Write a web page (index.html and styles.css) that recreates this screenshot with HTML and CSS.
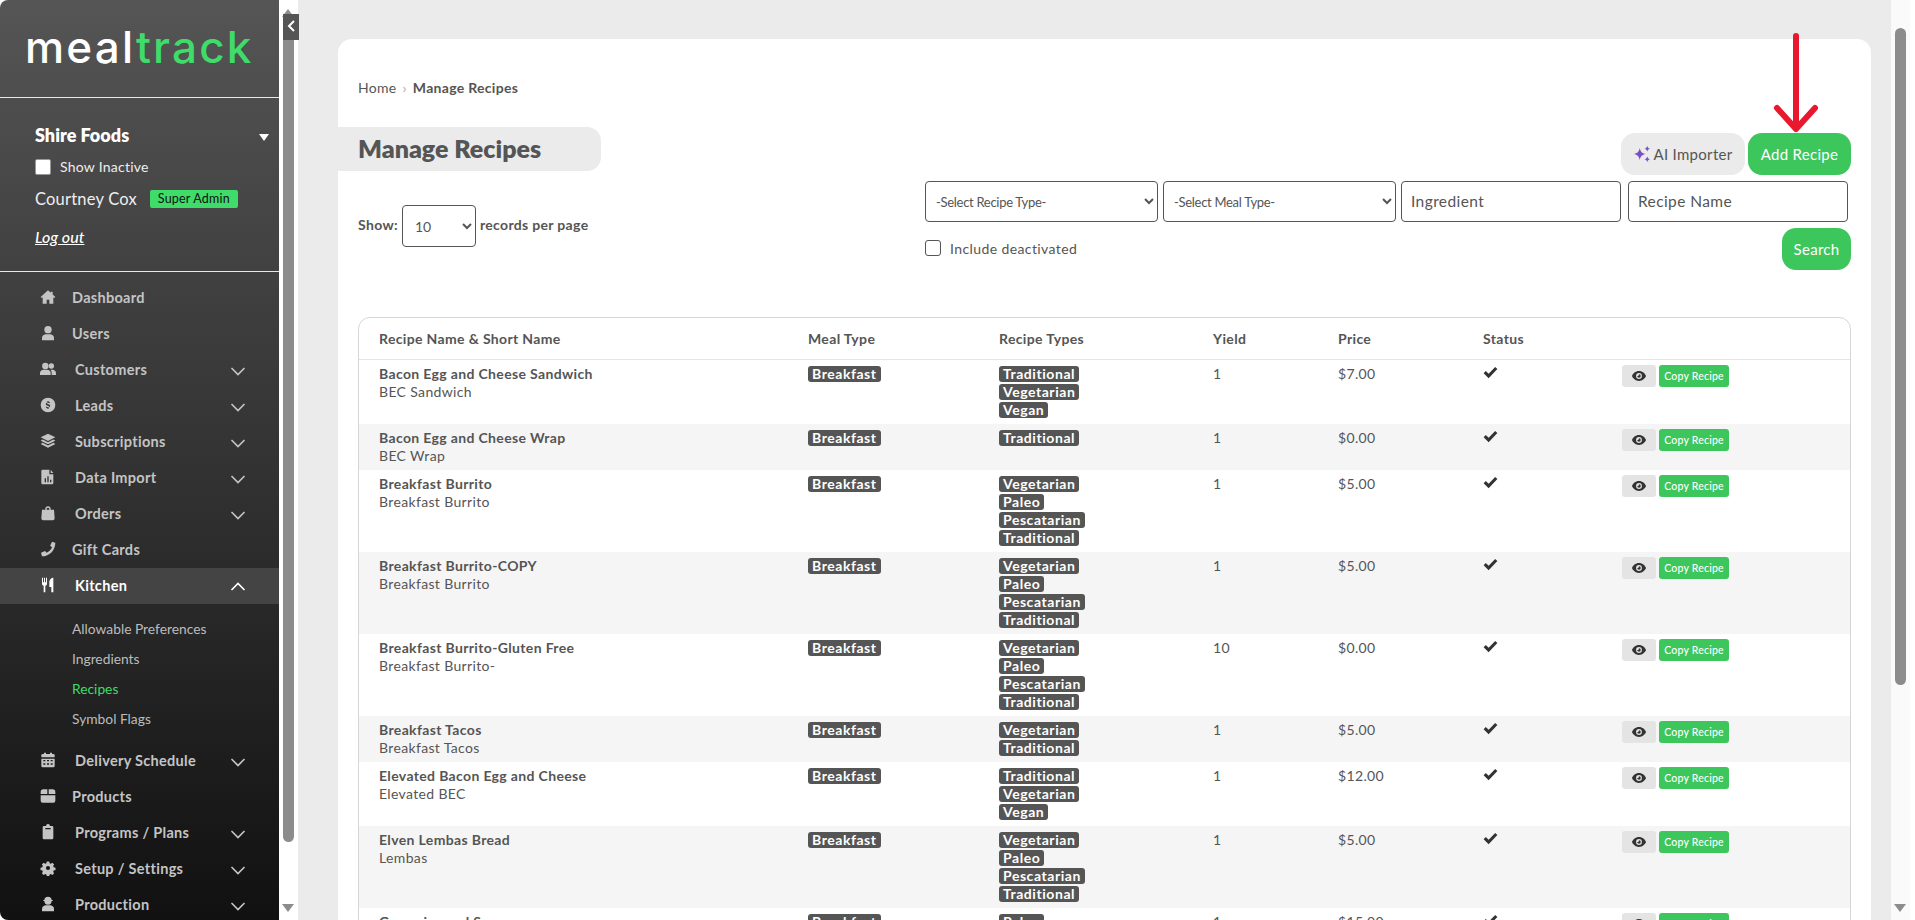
FILE: index.html
```html
<!DOCTYPE html>
<html lang="en">
<head>
<meta charset="utf-8">
<title>Manage Recipes</title>
<link rel="stylesheet" href="styles.css">
</head>
<body>
<svg class="defs" width="0" height="0">
  <symbol id="i-home" viewBox="0 0 24 24"><path d="M12 2 1 12l1.500 1.500L4 12.200V22h6v-6h4v6h6v-9.800l1.500 1.300L23 12l-4-3.600V4h-3v1.700z"/></symbol>
  <symbol id="i-user" viewBox="0 0 24 24"><circle cx="12" cy="7" r="5.500"/><path d="M3 23v-3.500C3 16 6 14 9 14h6c3 0 6 2 6 5.500V23z"/></symbol>
  <symbol id="i-users" viewBox="0 0 24 24"><circle cx="8" cy="7.500" r="4.800"/><circle cx="17" cy="7.500" r="4"/><path d="M0 21v-3c0-3 2.500-5 5-5h6c2.500 0 5 2 5 5v3z"/><path d="M17.500 21v-3.500c0-1.700-.6-3.200-1.700-4.500H19c2.700 0 5 2 5 5v3z"/></symbol>
  <symbol id="i-coin" viewBox="0 0 24 24"><path fill-rule="evenodd" d="M12 1a11 11 0 1 0 0 22 11 11 0 0 0 0-22zm.8 5v1.300c1 .2 1.800.7 2.200 1.300l-1.100.9c-.4-.5-1-.8-1.900-.8-.9 0-1.400.4-1.400.9s.4.800 1.800 1.100c1.800.4 2.900 1 2.900 2.600 0 1.300-1 2.200-2.500 2.400V18h-1.500v-1.300c-1.200-.2-2.100-.7-2.600-1.500l1.100-.9c.5.600 1.200 1 2.200 1 1 0 1.500-.4 1.500-1s-.4-.9-1.900-1.200c-1.700-.4-2.800-1-2.800-2.500 0-1.200.9-2.100 2.400-2.300V6z"/></symbol>
  <symbol id="i-layers" viewBox="0 0 24 24"><path d="M12 1 1 6.500 12 12l11-5.500z"/><path d="M4 9.800 1 11.500 12 17l11-5.500-3-1.700-8 4z"/><path d="M4 14.800 1 16.500 12 22l11-5.500-3-1.700-8 4z"/></symbol>
  <symbol id="i-file" viewBox="0 0 24 24"><path fill-rule="evenodd" d="M4 1h10v7h6v13a2 2 0 0 1-2 2H4a2 2 0 0 1-2-2V3a2 2 0 0 1 2-2zm12 0 4 5h-4zM7 14v6h2v-6zm4-3v9h2v-9zm4 5v4h2v-4z"/></symbol>
  <symbol id="i-bag" viewBox="0 0 24 24"><path fill-rule="evenodd" d="M8 7V6a4 4 0 0 1 8 0v1h5l1 13a3 3 0 0 1-3 3H5a3 3 0 0 1-3-3L3 7zm2 0h4V6a2 2 0 0 0-4 0z"/></symbol>
  <symbol id="i-phone" viewBox="0 0 24 24"><path d="M23 2.500 18 1l-2.800 6 2.800 2.500c-1.500 3.500-4.500 6.500-8 8L7.500 15 1.500 17.800 3 23c11 0 20-9 20-20.500z"/></symbol>
  <symbol id="i-food" viewBox="0 0 24 24"><path d="M3 1h1.500v7H6V1h1.500v7H9V1h1.500v9c0 1.500-1 2.500-2.500 3v10H5.500V13C4 12.500 3 11.500 3 10zM20 1v22h-3v-8h-3V7c0-3 3-6 6-6z"/></symbol>
  <symbol id="i-cal" viewBox="0 0 24 24"><path fill-rule="evenodd" d="M6 1h3v2h6V1h3v2h2a2 2 0 0 1 2 2v3H2V5a2 2 0 0 1 2-2h2zM2 10h20v11a2 2 0 0 1-2 2H4a2 2 0 0 1-2-2zm3 2v2h3v-2zm5.500 0v2h3v-2zm5.500 0v2h3v-2zM5 17v2h3v-2zm5.500 0v2h3v-2zm5.500 0v2h3v-2z"/></symbol>
  <symbol id="i-box" viewBox="0 0 24 24"><path d="M5 2h6v7H1V6a4 4 0 0 1 4-4zM13 2h6a4 4 0 0 1 4 4v3H13zM1 11h22v8a3 3 0 0 1-3 3H4a3 3 0 0 1-3-3z"/></symbol>
  <symbol id="i-clip" viewBox="0 0 24 24"><path fill-rule="evenodd" d="M12 0a3 3 0 0 1 3 3h3a2 2 0 0 1 2 2v16a2 2 0 0 1-2 2H6a2 2 0 0 1-2-2V5a2 2 0 0 1 2-2h3a3 3 0 0 1 3-3zM8 6v2h8V6z"/></symbol>
  <symbol id="i-gear" viewBox="0 0 24 24"><path fill-rule="evenodd" d="m10 1h4l.7 3 2 .9 2.700-1.600 2.800 2.800-1.600 2.700.9 2 3 .7v4l-3 .7-.9 2 1.600 2.700-2.800 2.800-2.700-1.600-2 .9-.7 3h-4l-.7-3-2-.9-2.700 1.600-2.800-2.800 1.600-2.700-.9-2-3-.7v-4l3-.7.9-2L1.800 6.100 4.600 3.300l2.700 1.600 2-.9zM12 8.500a3.500 3.500 0 1 0 0 7 3.500 3.500 0 0 0 0-7z" transform="translate(1.200 1.200) scale(.9)"/></symbol>
  <symbol id="i-worker" viewBox="0 0 24 24"><path d="M12 1c3.500 0 5.500 2.500 5.500 5H19v1.500h-1.500A5.500 5.500 0 0 1 6.500 7.500H5V6h1.500c0-2.500 2-5 5.500-5z"/><path d="M3 23v-3.500C3 16 6 14 9 14h6c3 0 6 2 6 5.500V23z"/></symbol>
  <symbol id="i-eye" viewBox="0 0 24 24"><path fill-rule="evenodd" d="M12 3.500C18 3.500 22.500 8 24 12c-1.500 4-6 8.500-12 8.500S1.500 16 0 12C1.500 8 6 3.500 12 3.500zM12 7a5 5 0 1 0 0 10 5 5 0 0 0 0-10zm0 2a3 3 0 0 1 3 3 3 3 0 0 1-6 0c1.500.5 3-1 3-3z"/></symbol>
  <symbol id="i-check" viewBox="0 0 24 24"><path d="M9 21 1 13l3.500-3.500L9 14 19.500 3 23 6.500z"/></symbol>
  <symbol id="i-down" viewBox="0 0 14 9"><path d="M1 1.500 7 7.500l6-6" fill="none" stroke="currentColor" stroke-width="1.700" stroke-linecap="round"/></symbol>
  <symbol id="i-up" viewBox="0 0 14 9"><path d="M1 7.500 7 1.500l6 6" fill="none" stroke="currentColor" stroke-width="1.700" stroke-linecap="round"/></symbol>
</svg>

<aside class="sidebar">
  <div class="brand"><span class="brand-meal">meal</span><span class="brand-track">track</span></div>
  <div class="account">
    <div class="account-name"><span>Shire Foods</span><i class="caret"></i></div>
    <label class="account-check"><span class="white-box"></span>Show Inactive</label>
    <div class="account-user"><span>Courtney Cox</span><span class="role">Super Admin</span></div>
    <a class="logout">Log out</a>
  </div>
  <nav class="nav">
    <a class="nav-item"><svg class="nav-icon"><use href="#i-home"/></svg><span class="nav-label">Dashboard</span></a>
    <a class="nav-item"><svg class="nav-icon"><use href="#i-user"/></svg><span class="nav-label">Users</span></a>
    <a class="nav-item has-sub"><svg class="nav-icon"><use href="#i-users"/></svg><span class="nav-label">Customers</span><svg class="nav-chev"><use href="#i-down"/></svg></a>
    <a class="nav-item has-sub"><svg class="nav-icon"><use href="#i-coin"/></svg><span class="nav-label">Leads</span><svg class="nav-chev"><use href="#i-down"/></svg></a>
    <a class="nav-item has-sub"><svg class="nav-icon"><use href="#i-layers"/></svg><span class="nav-label">Subscriptions</span><svg class="nav-chev"><use href="#i-down"/></svg></a>
    <a class="nav-item has-sub"><svg class="nav-icon"><use href="#i-file"/></svg><span class="nav-label">Data Import</span><svg class="nav-chev"><use href="#i-down"/></svg></a>
    <a class="nav-item has-sub"><svg class="nav-icon"><use href="#i-bag"/></svg><span class="nav-label">Orders</span><svg class="nav-chev"><use href="#i-down"/></svg></a>
    <a class="nav-item"><svg class="nav-icon"><use href="#i-phone"/></svg><span class="nav-label">Gift Cards</span></a>
    <a class="nav-item has-sub is-open"><svg class="nav-icon"><use href="#i-food"/></svg><span class="nav-label">Kitchen</span><svg class="nav-chev"><use href="#i-up"/></svg></a>
    <div class="subnav">
      <a class="sub-item">Allowable Preferences</a>
      <a class="sub-item">Ingredients</a>
      <a class="sub-item is-current">Recipes</a>
      <a class="sub-item">Symbol Flags</a>
    </div>
    <a class="nav-item has-sub"><svg class="nav-icon"><use href="#i-cal"/></svg><span class="nav-label">Delivery Schedule</span><svg class="nav-chev"><use href="#i-down"/></svg></a>
    <a class="nav-item"><svg class="nav-icon"><use href="#i-box"/></svg><span class="nav-label">Products</span></a>
    <a class="nav-item has-sub"><svg class="nav-icon"><use href="#i-clip"/></svg><span class="nav-label">Programs / Plans</span><svg class="nav-chev"><use href="#i-down"/></svg></a>
    <a class="nav-item has-sub"><svg class="nav-icon"><use href="#i-gear"/></svg><span class="nav-label">Setup / Settings</span><svg class="nav-chev"><use href="#i-down"/></svg></a>
    <a class="nav-item has-sub"><svg class="nav-icon"><use href="#i-worker"/></svg><span class="nav-label">Production</span><svg class="nav-chev"><use href="#i-down"/></svg></a>
  </nav>
</aside>

<div class="scroll side-scroll">
  <i class="arrow-up"></i><div class="thumb side-thumb"></div><i class="arrow-down side-down"></i>
  <div class="collapse"><svg viewBox="0 0 10 14" width="10" height="14"><path d="M8 2 3 7l5 5" fill="none" stroke="#fff" stroke-width="2"/></svg></div>
</div>

<main class="main">
  <section class="card">
    <div class="crumbs"><a>Home</a><span class="crumb-sep">›</span><strong>Manage Recipes</strong></div>
    <div class="title-row">
      <h1 class="title">Manage Recipes</h1>
      <div class="title-actions">
        <button class="btn btn-grey"><svg viewBox="0 0 24 24" width="18" height="18"><path fill="#7a4fc4" d="M9 4c1 5 3 7 8 8-5 1-7 3-8 8-1-5-3-7-8-8 5-1 7-3 8-8zM19 1c.5 2.500 1.500 3.500 4 4-2.500.5-3.500 1.500-4 4-.5-2.500-1.500-3.500-4-4 2.500-.5 3.500-1.500 4-4zM19 15c.5 2.500 1.500 3.500 4 4-2.500.5-3.500 1.500-4 4-.5-2.500-1.500-3.500-4-4 2.500-.5 3.500-1.500 4-4z"/></svg>AI Importer</button>
        <button class="btn btn-green">Add Recipe</button>
      </div>
    </div>
    <div class="filter-row">
      <div class="show"><b>Show:</b><select class="field show-select"><option>10</option></select><b>records per page</b></div>
      <div class="filters">
        <div class="filter-fields">
          <select class="field filter-select"><option>-Select Recipe Type-</option></select>
          <select class="field filter-select"><option>-Select Meal Type-</option></select>
          <input class="field filter-input" placeholder="Ingredient">
          <input class="field filter-input gap-input" placeholder="Recipe Name">
        </div>
        <div class="filter-foot">
          <label class="deact"><span class="check-box"></span>Include deactivated</label>
          <button class="btn btn-green btn-search">Search</button>
        </div>
      </div>
    </div>
    <div class="table-wrap">
      <table class="recipes">
        <colgroup><col class="c1"><col class="c2"><col class="c3"><col class="c4"><col class="c5"><col class="c6"><col class="c7"><col class="c8"></colgroup>
        <thead><tr><th>Recipe Name &amp; Short Name</th><th>Meal Type</th><th>Recipe Types</th><th>Yield</th><th>Price</th><th>Status</th><th></th><th></th></tr></thead>
        <tbody>
          <tr><td><b>Bacon Egg and Cheese Sandwich</b><br>BEC Sandwich</td><td><span class="tag">Breakfast</span></td><td><span class="tag">Traditional</span><span class="tag">Vegetarian</span><span class="tag">Vegan</span></td><td>1</td><td>$7.00</td><td><svg class="tick"><use href="#i-check"/></svg></td><td><div class="acts"><button class="mini mini-eye"><svg class="eye"><use href="#i-eye"/></svg></button><button class="mini mini-copy">Copy Recipe</button></div></td><td></td></tr>
          <tr><td><b>Bacon Egg and Cheese Wrap</b><br>BEC Wrap</td><td><span class="tag">Breakfast</span></td><td><span class="tag">Traditional</span></td><td>1</td><td>$0.00</td><td><svg class="tick"><use href="#i-check"/></svg></td><td><div class="acts"><button class="mini mini-eye"><svg class="eye"><use href="#i-eye"/></svg></button><button class="mini mini-copy">Copy Recipe</button></div></td><td></td></tr>
          <tr><td><b>Breakfast Burrito</b><br>Breakfast Burrito</td><td><span class="tag">Breakfast</span></td><td><span class="tag">Vegetarian</span><span class="tag">Paleo</span><span class="tag">Pescatarian</span><span class="tag">Traditional</span></td><td>1</td><td>$5.00</td><td><svg class="tick"><use href="#i-check"/></svg></td><td><div class="acts"><button class="mini mini-eye"><svg class="eye"><use href="#i-eye"/></svg></button><button class="mini mini-copy">Copy Recipe</button></div></td><td></td></tr>
          <tr><td><b>Breakfast Burrito-COPY</b><br>Breakfast Burrito</td><td><span class="tag">Breakfast</span></td><td><span class="tag">Vegetarian</span><span class="tag">Paleo</span><span class="tag">Pescatarian</span><span class="tag">Traditional</span></td><td>1</td><td>$5.00</td><td><svg class="tick"><use href="#i-check"/></svg></td><td><div class="acts"><button class="mini mini-eye"><svg class="eye"><use href="#i-eye"/></svg></button><button class="mini mini-copy">Copy Recipe</button></div></td><td></td></tr>
          <tr><td><b>Breakfast Burrito-Gluten Free</b><br>Breakfast Burrito-</td><td><span class="tag">Breakfast</span></td><td><span class="tag">Vegetarian</span><span class="tag">Paleo</span><span class="tag">Pescatarian</span><span class="tag">Traditional</span></td><td>10</td><td>$0.00</td><td><svg class="tick"><use href="#i-check"/></svg></td><td><div class="acts"><button class="mini mini-eye"><svg class="eye"><use href="#i-eye"/></svg></button><button class="mini mini-copy">Copy Recipe</button></div></td><td></td></tr>
          <tr><td><b>Breakfast Tacos</b><br>Breakfast Tacos</td><td><span class="tag">Breakfast</span></td><td><span class="tag">Vegetarian</span><span class="tag">Traditional</span></td><td>1</td><td>$5.00</td><td><svg class="tick"><use href="#i-check"/></svg></td><td><div class="acts"><button class="mini mini-eye"><svg class="eye"><use href="#i-eye"/></svg></button><button class="mini mini-copy">Copy Recipe</button></div></td><td></td></tr>
          <tr><td><b>Elevated Bacon Egg and Cheese</b><br>Elevated BEC</td><td><span class="tag">Breakfast</span></td><td><span class="tag">Traditional</span><span class="tag">Vegetarian</span><span class="tag">Vegan</span></td><td>1</td><td>$12.00</td><td><svg class="tick"><use href="#i-check"/></svg></td><td><div class="acts"><button class="mini mini-eye"><svg class="eye"><use href="#i-eye"/></svg></button><button class="mini mini-copy">Copy Recipe</button></div></td><td></td></tr>
          <tr><td><b>Elven Lembas Bread</b><br>Lembas</td><td><span class="tag">Breakfast</span></td><td><span class="tag">Vegetarian</span><span class="tag">Paleo</span><span class="tag">Pescatarian</span><span class="tag">Traditional</span></td><td>1</td><td>$5.00</td><td><svg class="tick"><use href="#i-check"/></svg></td><td><div class="acts"><button class="mini mini-eye"><svg class="eye"><use href="#i-eye"/></svg></button><button class="mini mini-copy">Copy Recipe</button></div></td><td></td></tr>
          <tr><td><b>Groceries and Soup</b><br>Soup</td><td><span class="tag">Breakfast</span></td><td><span class="tag">Paleo</span></td><td>1</td><td>$15.00</td><td><svg class="tick"><use href="#i-check"/></svg></td><td><div class="acts"><button class="mini mini-eye"><svg class="eye"><use href="#i-eye"/></svg></button><button class="mini mini-copy">Copy Recipe</button></div></td><td></td></tr>
        </tbody>
      </table>
    </div>
    <svg class="annot" viewBox="0 0 50 100" width="50" height="100"><path d="M25 3v91M6 75l19 21 19-21" fill="none" stroke="#e8192f" stroke-width="6" stroke-linecap="round" stroke-linejoin="round"/></svg>
  </section>
</main>

<div class="scroll page-scroll">
  <div class="thumb page-thumb"></div><i class="arrow-down page-down"></i>
</div>
</body>
</html>
```

FILE: styles.css
```css
* { box-sizing: border-box; }
html, body { height: 100%; }
body {
  margin: 0;
  display: flex;
  height: 920px;
  overflow: hidden;
  background: #fff;
  color: #555;
  font-family: Lato, "Open Sans", sans-serif;
  font-size: 14px;
}
.defs { position: absolute; }

/* Sidebar */
.sidebar {
  flex: 0 0 279px;
  height: 920px;
  overflow: hidden;
  color: #fff;
  background: linear-gradient(#555555, #111111);
  border-radius: 8px 0 0 8px;
}
.brand {
  height: 98px;
  padding: 17px 0 0 25px;
  border-bottom: 1px solid #e8e8e8;
  font-family: Inter, sans-serif;
  font-size: 44px;
  font-weight: 500;
  line-height: 60px;
  letter-spacing: 2.200px;
}
.brand-track { color: #3fdc6a; }
.account {
  height: 174px;
  padding: 25px 14px 0 35px;
  border-bottom: 1px solid #e8e8e8;
}
.account-name {
  display: flex;
  align-items: center;
  justify-content: space-between;
  font-size: 18px;
  font-weight: 800;
  line-height: 24px;
}
.caret {
  margin: 4px -4px 0 0;
  border-left: 5px solid transparent;
  border-right: 5px solid transparent;
  border-top: 7px solid #fff;
}
.account-check {
  display: flex;
  align-items: center;
  gap: 9px;
  margin-top: 11px;
  line-height: 18px;
  letter-spacing: .25px;
  color: #eee;
}
.white-box {
  width: 16px;
  height: 16px;
  background: #fff;
  border: 1px solid #999;
  border-radius: 2px;
}
.account-user {
  display: flex;
  align-items: center;
  gap: 13px;
  margin-top: 14px;
  font-size: 16.500px;
  line-height: 18px;
  letter-spacing: .2px;
  color: #eee;
}
.role {
  width: 88px;
  background: #3fdc6a;
  color: #111;
  border-radius: 2px;
  font-size: 12.500px;
  line-height: 18px;
  text-align: center;
}
.logout {
  display: block;
  margin-top: 20px;
  font-size: 16px;
  font-style: italic;
  font-weight: 500;
  line-height: 18px;
  text-decoration: underline;
}
.nav { padding-top: 8px; }
.nav-item {
  display: flex;
  align-items: center;
  height: 36px;
  padding: 0 0 2px 39px;
  color: #c4c4c4;
  font-weight: 700;
  font-size: 14.500px;
  letter-spacing: .3px;
}
.nav-icon {
  flex: none;
  width: 18px;
  height: 16px;
  margin-right: 15px;
  fill: #c4c4c4;
}
.has-sub .nav-icon { margin-right: 18px; }
.nav-label { flex: 1; }
.nav-chev {
  flex: none;
  width: 14px;
  height: 9px;
  margin: 5px 34px 0 0;
  color: #c4c4c4;
}
.is-open { background: #444; color: #fff; }
.is-open .nav-label { color: #fff; }
.is-open .nav-icon { fill: #fff; }
.is-open .nav-chev { color: #fff; margin-top: 3px; }
.subnav { padding: 10px 0 9px 72px; }
.sub-item {
  display: block;
  height: 30px;
  color: #bcbcbc;
  font-size: 13.800px;
  line-height: 29px;
}
.is-current { color: #3fdc6a; }

/* Scrollbars */
.scroll { position: relative; flex: none; height: 920px; }
.side-scroll { width: 19px; background: #fff; }
.page-scroll { width: 24px; background: #fafafa; border-right: 5px solid #fff; }
.thumb { position: absolute; background: #8c8c8c; border-radius: 0 0 6px 6px; }
.side-thumb { left: 4px; top: 18px; width: 11px; height: 824px; }
.page-thumb { left: 4px; top: 28px; width: 11px; height: 657px; border-radius: 6px; }
.arrow-up, .arrow-down {
  position: absolute;
  width: 0;
  height: 0;
  border-left: 6px solid transparent;
  border-right: 6px solid transparent;
}
.arrow-up { left: 3px; top: 9px; border-bottom: 8px solid #8c8c8c; }
.arrow-down { border-top: 8px solid #8c8c8c; }
.side-down { left: 3px; top: 904px; }
.page-down { left: 3px; top: 904px; }
.collapse {
  position: absolute;
  left: 4px;
  top: 14px;
  width: 16px;
  height: 26px;
  padding: 5px 0 0 3px;
  background: #555;
}

/* Main */
.main {
  flex: 1;
  min-width: 0;
  height: 920px;
  overflow: hidden;
  padding: 39px 20px 0 40px;
  background: #ebebeb;
}
.card {
  position: relative;
  height: 1200px;
  padding-top: 39px;
  background: #fff;
  border-radius: 14px 14px 0 0;
}
.crumbs {
  display: flex;
  align-items: center;
  height: 18px;
  padding-left: 20px;
  font-size: 14px;
  letter-spacing: .3px;
}
.crumb-sep { margin: 0 6px; color: #aaa; }
.crumbs strong { font-weight: 700; }
.title-row {
  display: flex;
  justify-content: space-between;
  align-items: flex-start;
  margin-top: 31px;
  padding-right: 20px;
}
.title {
  width: 263px;
  height: 44px;
  margin: 0;
  padding-left: 20px;
  background: #ebebeb;
  border-radius: 0 14px 14px 0;
  font-size: 25px;
  font-weight: 800;
  line-height: 43px;
}
.title-actions { display: flex; gap: 3px; margin-top: 6px; }
.btn {
  display: inline-flex;
  align-items: center;
  justify-content: center;
  height: 42px;
  border: 0;
  border-radius: 14px;
  font-family: Lato, sans-serif;
  font-size: 15px;
  letter-spacing: .3px;
}
.btn-grey { width: 124px; gap: 2px; background: #ebebeb; color: #555; }
.btn-green { width: 103px; background: #3cc65c; color: #fff; }
.btn-search { width: 69px; }
.filter-row {
  display: flex;
  justify-content: space-between;
  margin-top: 6px;
  padding: 0 20px;
}
.show {
  display: flex;
  align-items: center;
  gap: 4px;
  height: 42px;
  margin-top: 24px;
}
.show b { font-weight: 700; letter-spacing: .33px; padding-bottom: 3px; }
.field {
  height: 41px;
  background: #fff;
  border: 1px solid #555;
  border-radius: 4px;
  color: #555;
  font-family: Lato, sans-serif;
  font-size: 14px;
}
.show-select { width: 74px; height: 42px; padding-left: 8px; }
.filters { width: 926px; }
.filter-fields { display: flex; gap: 5px; }
.filter-select { width: 233px; padding-left: 6px; font-size: 13px; letter-spacing: -.3px; }
.filter-input { width: 220px; padding: 0 9px 2px; font-size: 15.500px; letter-spacing: .4px; }
.filter-input::placeholder { color: #555; opacity: 1; }
.gap-input { margin-left: 2px; }
.filter-foot {
  display: flex;
  justify-content: space-between;
  margin-top: 6px;
}
.deact {
  display: flex;
  align-items: center;
  gap: 9px;
  height: 16px;
  margin-top: 12px;
  letter-spacing: .4px;
}
.check-box {
  width: 16px;
  height: 16px;
  border: 1px solid #555;
  border-radius: 3px;
}
.table-wrap {
  margin: 47px 20px 0;
  border: 1px solid #d6d6d6;
  border-radius: 12px 12px 0 0;
  overflow: hidden;
}
.recipes {
  width: 1491px;
  table-layout: fixed;
  border-collapse: collapse;
  letter-spacing: .35px;
}
.c1 { width: 429px; }
.c2 { width: 191px; }
.c3 { width: 214px; }
.c4 { width: 125px; }
.c5 { width: 145px; }
.c6 { width: 139px; }
.c7 { width: 130px; }
.c8 { width: 118px; }
.recipes th {
  height: 41px;
  padding: 0 0 0 20px;
  border-bottom: 1px solid #e4e4e4;
  font-weight: 700;
  text-align: left;
}
.recipes td {
  padding: 5px 0 5px 20px;
  line-height: 18px;
  vertical-align: top;
}
.recipes td b { font-weight: 700; }
.recipes tbody tr:nth-child(even) { background: #f5f5f5; }
.tag {
  display: block;
  width: fit-content;
  height: 16px;
  margin: 0 0 2px;
  padding: 0 4px;
  background: #555;
  color: #fff;
  border-radius: 3px;
  font-weight: 700;
  font-size: 14px;
  letter-spacing: .55px;
  line-height: 16px;
}
.tag:first-child { margin-top: 1px; }
.tag:last-child { margin-bottom: 1px; }
.tick { display: block; width: 15px; height: 15px; margin: 0; fill: #333; }
.acts { display: flex; gap: 3px; }
.mini {
  height: 22px;
  margin: 0;
  padding: 0;
  border: 0;
  border-radius: 3px;
  font-family: Lato, sans-serif;
}
.mini-eye { width: 34px; background: #e4e4e4; }
.mini-copy { width: 70px; background: #3cc65c; color: #fff; font-size: 10.500px; font-weight: 500; letter-spacing: .2px; }
.eye { display: block; width: 14px; height: 14px; margin: 0 auto; fill: #333; }
.annot { position: absolute; left: 1433px; top: -6px; }
```
